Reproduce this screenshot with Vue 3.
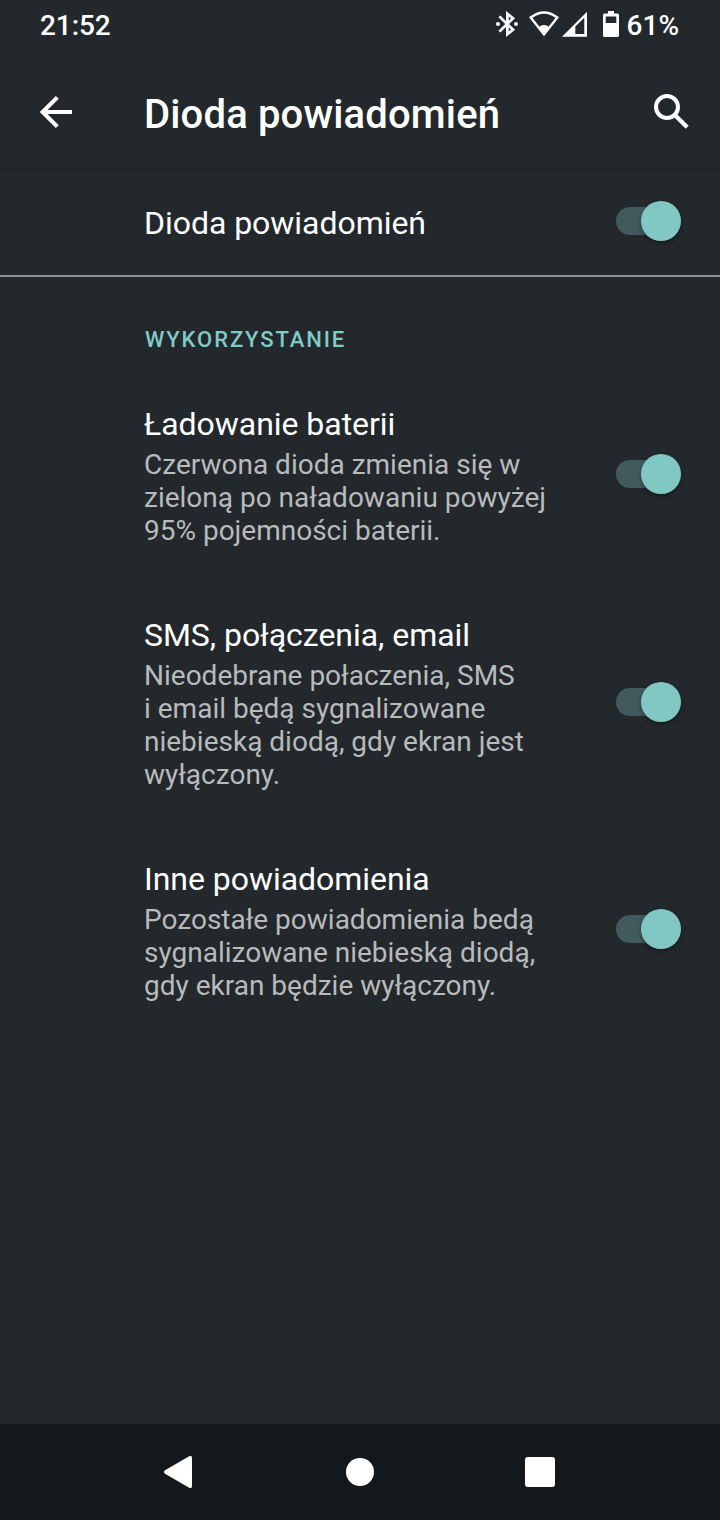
<script setup>
import { ref } from 'vue'

const mainEnabled = ref(true)
const items = ref([
  {
    title: 'Ładowanie baterii',
    lines: ['Czerwona dioda zmienia się w', 'zieloną po naładowaniu powyżej', '95% pojemności baterii.'],
    on: true,
  },
  {
    title: 'SMS, połączenia, email',
    lines: ['Nieodebrane połaczenia, SMS', 'i email będą sygnalizowane', 'niebieską diodą, gdy ekran jest', 'wyłączony.'],
    on: true,
  },
  {
    title: 'Inne powiadomienia',
    lines: ['Pozostałe powiadomienia bedą', 'sygnalizowane niebieską diodą,', 'gdy ekran będzie wyłączony.'],
    on: true,
  },
])
</script>

<template>
  <div class="screen">
    <div class="status">
      <span class="clock">21:52</span>
      <div class="indicators">
        <svg class="bluetooth" width="22" height="26" viewBox="0 0 22 26">
          <path d="M3.400 5.400 17 18.700 11.400 23.200V2.800L17 7.300 3.400 20.600" fill="none" stroke="#fff" stroke-width="2.700" />
          <circle cx="2" cy="13" r="2" fill="#fff" />
          <circle cx="20" cy="13" r="2" fill="#fff" />
        </svg>
        <svg class="wifi" width="30" height="26" viewBox="0 0 30 26">
          <path d="M1.700 6.500Q15-3.500 28.300 6.500L15 23.400Z" fill="none" stroke="#fff" stroke-width="2.400" />
          <path d="M9.300 16.400Q15 11.600 20.700 16.400L15 24Z" fill="#fff" />
        </svg>
        <svg class="signal" width="25" height="26" viewBox="0 0 25 26">
          <path fill-rule="evenodd" d="M0 25.700 25 .7V25.700ZM13.300 15.600V23.100H22.300V6.800Z" fill="#fff" />
        </svg>
        <svg class="battery" width="16" height="26" viewBox="0 0 16 26">
          <path fill-rule="evenodd" d="M5 0h6v2.400h3.400Q16 2.400 16 4v20.400q0 1.600-1.600 1.600H1.600Q0 26 0 24.400V4q0-1.600 1.600-1.600H5ZM2.700 5.500V12h10.600V5.500Z" fill="#fff" />
        </svg>
        <span class="percent">61%</span>
      </div>
    </div>

    <header class="appbar">
      <svg class="back" width="32" height="32" viewBox="0 0 32 32">
        <path d="M32 16H3M17.300 1.400 2.700 16l14.600 14.600" fill="none" stroke="#fff" stroke-width="4" />
      </svg>
      <h1>Dioda powiadomień</h1>
      <svg class="search" width="36" height="36" viewBox="0 0 36 36">
        <circle cx="13" cy="13" r="11" fill="none" stroke="#fff" stroke-width="4" />
        <path d="m20.400 20.400 12.800 12.800" stroke="#fff" stroke-width="4.200" />
      </svg>
    </header>

    <section class="main-row">
      <span class="title">Dioda powiadomień</span>
      <button class="switch" :class="{ on: mainEnabled }" @click="mainEnabled = !mainEnabled"><i></i></button>
    </section>

    <h2>WYKORZYSTANIE</h2>

    <section v-for="item in items" :key="item.title" class="row">
      <div class="text">
        <div class="title">{{ item.title }}</div>
        <div class="desc">
          <div v-for="line in item.lines" :key="line">{{ line }}</div>
        </div>
      </div>
      <button class="switch" :class="{ on: item.on }" @click="item.on = !item.on"><i></i></button>
    </section>

    <nav class="navbar">
      <div>
        <svg width="28" height="32" viewBox="0 0 28 32">
          <path d="M1 14.300 25.200.300Q28-.800 28 2v28q0 2.800-2.800 1.700L1 17.700Q-1 16 1 14.300Z" fill="#fff" />
        </svg>
      </div>
      <div><span class="home"></span></div>
      <div><span class="recent"></span></div>
    </nav>
  </div>
</template>

<style>
body {
  margin: 0;
  background: #23282c;
}
</style>

<style scoped>
.screen {
  width: 720px;
  height: 1520px;
  display: flex;
  flex-direction: column;
  overflow: hidden;
  background: #23282c;
  color: #fff;
  font-family: Roboto, 'Liberation Sans', sans-serif;
}
.status {
  height: 48px;
  box-sizing: border-box;
  padding: 9px 41px 0 40px;
  display: flex;
  justify-content: space-between;
  font-size: 28px;
  font-weight: 500;
  line-height: 33px;
}
.clock {
  letter-spacing: -0.1px;
}
.indicators {
  display: flex;
}
.indicators svg {
  margin-top: 2px;
}
.bluetooth { margin-right: 11px; }
.wifi { margin-right: 3px; }
.signal { margin-right: 16px; }
.battery { margin-right: 8px; }
.appbar {
  height: 120px;
  box-sizing: border-box;
  padding: 0 30px 0 40px;
  display: flex;
  align-items: flex-start;
}
.back {
  margin: 48px 72px 0 0;
}
h1 {
  flex: 1;
  margin: 43px 0 0;
  font-size: 40px;
  font-weight: 500;
  line-height: 48px;
  letter-spacing: 0.15px;
}
.search {
  margin-top: 46px;
}
.main-row {
  height: 109px;
  box-sizing: border-box;
  padding: 0 39px 0 144px;
  display: flex;
  align-items: center;
  justify-content: space-between;
  background: linear-gradient(#1f2428, #23282c 6px);
  border-bottom: 2px solid #8f9596;
}
.main-row .title {
  margin-top: 3px;
}
.main-row .switch {
  margin-top: -1px;
}
.title {
  font-size: 32px;
  line-height: 38px;
  letter-spacing: -0.04px;
}
h2 {
  height: 91px;
  box-sizing: border-box;
  margin: 0;
  padding: 50px 0 0 145px;
  color: #80cbc4;
  font-size: 22px;
  font-weight: 500;
  line-height: 26px;
  letter-spacing: 1.9px;
}
.row {
  padding: 37px 39px 32px 144px;
  display: flex;
  justify-content: space-between;
}
.desc {
  margin-top: 5px;
  color: #b8babb;
  font-size: 28px;
  line-height: 33px;
  white-space: nowrap;
}
.row .switch {
  align-self: center;
  margin-top: -4px;
}
.switch {
  width: 65px;
  height: 40px;
  padding: 0;
  border: 0;
  display: grid;
  align-items: center;
  background: none;
}
.switch::before {
  content: '';
  grid-area: 1 / 1;
  width: 55px;
  height: 28px;
  border-radius: 14px;
  background: #415a5c;
}
.switch i {
  grid-area: 1 / 1;
  width: 40px;
  height: 40px;
  border-radius: 50%;
  background: #9aa0a3;
  box-shadow: 0 2px 4px rgba(0, 0, 0, 0.35);
}
.switch.on i {
  margin-left: auto;
  background: #80c8c1;
}
.navbar {
  height: 96px;
  margin-top: auto;
  display: grid;
  grid-template-columns: repeat(3, 180px);
  justify-content: center;
  background: #14181b;
}
.navbar div {
  display: flex;
  align-items: center;
  justify-content: center;
}
.navbar svg {
  margin-right: 4px;
}
.home {
  width: 28px;
  height: 28px;
  border-radius: 50%;
  background: #fff;
}
.recent {
  width: 30px;
  height: 30px;
  border-radius: 3px;
  background: #fff;
}
</style>
